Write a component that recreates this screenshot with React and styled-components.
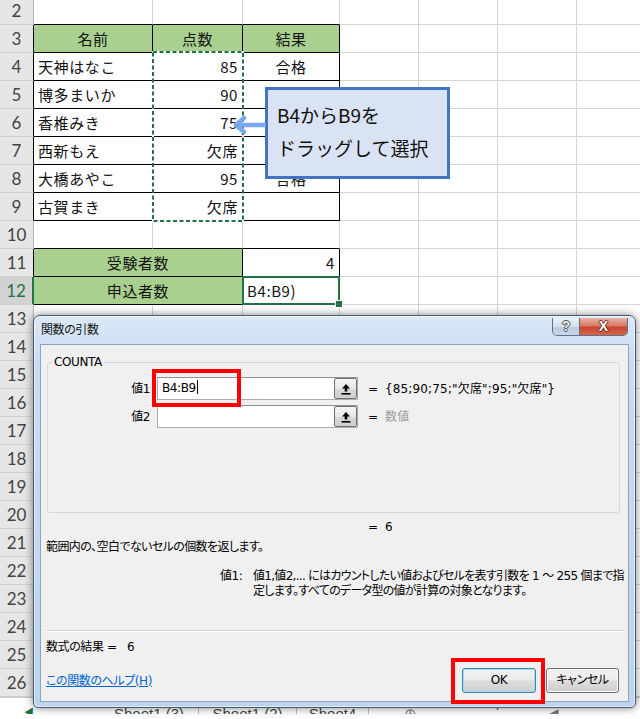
import React from "react";
import styled, { createGlobalStyle } from "styled-components";

const GRID = "#d4d4d4";
const BLACK = "#000";
const TABLE_GREEN = "#a9d08e";
const XL_GREEN = "#217346";

const tableRows = [
    { n: 4, name: "天神はなこ", score: "85", result: "合格" },
    { n: 5, name: "博多まいか", score: "90", result: "合格" },
    { n: 6, name: "香椎みき", score: "75", result: "合格" },
    { n: 7, name: "西新もえ", score: "欠席", result: "" },
    { n: 8, name: "大橋あやこ", score: "95", result: "合格" },
    { n: 9, name: "古賀まき", score: "欠席", result: "" },
];

const EmptyTail = () => (
    <>
        <Cell />
        <Cell />
        <Cell />
        <Cell $last />
    </>
);

const PlainRow = ({ n, topOfTable }) => (
    <>
        <RowHead>{n}</RowHead>
        <Cell $b={topOfTable ? BLACK : null} />
        <Cell $b={topOfTable ? BLACK : null} />
        <Cell $b={topOfTable ? BLACK : null} />
        <EmptyTail />
    </>
);

const Sheet = () => {
    const blanks = [];
    for (let n = 13; n <= 26; n++) blanks.push(<PlainRow key={n} n={n} />);

    return (
        <Grid>
            <PlainRow n={2} topOfTable />

            <RowHead $edge={BLACK}>3</RowHead>
            <Cell $r={BLACK} $b={BLACK} $fill={TABLE_GREEN} $align="center">名前</Cell>
            <Cell $r={BLACK} $b={BLACK} $fill={TABLE_GREEN} $align="center">点数</Cell>
            <Cell $r={BLACK} $b={BLACK} $fill={TABLE_GREEN} $align="center">結果</Cell>
            <EmptyTail />

            {tableRows.map(row => (
                <React.Fragment key={row.n}>
                    <RowHead $edge={BLACK}>{row.n}</RowHead>
                    <Cell $r={BLACK} $b={BLACK}>{row.name}</Cell>
                    <Cell $r={BLACK} $b={BLACK} $align="right">{row.score}</Cell>
                    <Cell $r={BLACK} $b={BLACK} $align="center">{row.result}</Cell>
                    <EmptyTail />
                </React.Fragment>
            ))}

            <PlainRow n={10} topOfTable />

            <RowHead $edge={BLACK}>11</RowHead>
            <Cell $span={2} $r={BLACK} $b={BLACK} $fill={TABLE_GREEN} $align="center">受験者数</Cell>
            <Cell $r={BLACK} $b={BLACK} $align="right">4</Cell>
            <EmptyTail />

            <RowHead $selected>12</RowHead>
            <Cell $span={2} $r={BLACK} $b={BLACK} $fill={TABLE_GREEN} $align="center">申込者数</Cell>
            <Cell $r={BLACK} $b={BLACK} $active>B4:B9)</Cell>
            <EmptyTail />

            {blanks}
        </Grid>
    );
};

const RefIcon = () => (
    <svg width="10" height="12" viewBox="0 0 10 12">
        <path d="M5 1 L9 5.5 H6.3 V8.5 H3.7 V5.5 H1 Z" fill="#000" />
        <rect x="0.5" y="10" width="9" height="1.6" fill="#000" />
    </svg>
);

const App = () => {
    return (
        <>
            <GlobalStyle />
            <Page>
                <Sheet />
                <TabBar>
                    <TabNav>◀</TabNav>
                    <Tab $w={67} $plain />
                    <Tab $w={99}>Sheet1 (3)</Tab>
                    <Tab $w={98}>Sheet1 (2)</Tab>
                    <Tab $w={72}>Sheet4</Tab>
                    <Tab $w={84} $plain>⊕</Tab>
                    <Tab $w={90} $plain>⋮</Tab>
                    <Tab $w={20} $plain>◀</Tab>
                </TabBar>

                <Marquee width="92" height="171" viewBox="0 0 92 171">
                    <rect x="1" y="1" width="90" height="169" fill="none" stroke="#fff" strokeWidth="2" />
                    <rect x="1" y="1" width="90" height="169" fill="none" stroke={XL_GREEN} strokeWidth="2" strokeDasharray="4 2.5" />
                </Marquee>

                <Callout>
                    B4からB9を<br />
                    ドラッグして選択
                </Callout>
                <Pointer width="36" height="22" viewBox="0 0 36 22">
                    <path d="M35 11 H7 M14 4 L6 11 L14 18" fill="none" stroke="#78a9f0" strokeWidth="4.5" strokeLinecap="round" strokeLinejoin="round" />
                </Pointer>

                <Dialog>
                    <TitleBar>
                        <Title>関数の引数</Title>
                        <Caption>
                            <HelpCap>?</HelpCap>
                            <CloseCap>X</CloseCap>
                        </Caption>
                    </TitleBar>
                    <Client>
                        <GroupBox>
                            <Legend>COUNTA</Legend>
                            <ArgRow>
                                <ArgLabel>値1</ArgLabel>
                                <RefEdit>
                                    <RefText>B4:B9<Caret /></RefText>
                                    <RefButton><RefIcon /></RefButton>
                                </RefEdit>
                                <Eq>=</Eq>
                                <ArgValue>{'{85;90;75;"欠席";95;"欠席"}'}</ArgValue>
                            </ArgRow>
                            <ArgRow>
                                <ArgLabel>値2</ArgLabel>
                                <RefEdit>
                                    <RefText />
                                    <RefButton><RefIcon /></RefButton>
                                </RefEdit>
                                <Eq>=</Eq>
                                <ArgValue $muted>数値</ArgValue>
                            </ArgRow>
                        </GroupBox>

                        <FuncResult>
                            <Eq>=</Eq>
                            <span>6</span>
                        </FuncResult>
                        <Description>範囲内の、空白でないセルの個数を返します。</Description>
                        <ArgHelp>
                            <span>値1:</span>
                            <div>
                                <HelpLine>値1,値2,... にはカウントしたい値およびセルを表す引数を 1 ～ 255 個まで指</HelpLine>
                                <HelpLine>定します。すべてのデータ型の値が計算の対象となります。</HelpLine>
                            </div>
                        </ArgHelp>
                        <Separator />
                        <FormulaResult>数式の結果 =&nbsp;&nbsp;&nbsp;6</FormulaResult>
                        <Footer>
                            <HelpLink>この関数のヘルプ(H)</HelpLink>
                            <Button $default>OK</Button>
                            <Button>キャンセル</Button>
                        </Footer>
                    </Client>
                </Dialog>

                <RedBox $x={152} $y={369} $w={89} $h={38} />
                <RedBox $x={451} $y={658} $w={94} $h={46} />
            </Page>
        </>
    );
};

export default App;

const GlobalStyle = createGlobalStyle`
html, body {
    margin: 0;
    padding: 0;
    background: #fff;
    overflow: hidden;
}
* {
    box-sizing: border-box;
}
`;

const Page = styled.div`
position: relative;
width: 640px;
height: 719px;
overflow: hidden;
background: #fff;
font-family: "Noto Sans CJK JP", sans-serif;
`;

const Grid = styled.div`
display: grid;
grid-template-columns: 34px 119px 90px 97px 79px 79px 79px 1fr;
grid-auto-rows: 28px;
margin-top: -3px;
`;

const RowHead = styled.div`
background: ${p => (p.$selected ? "#d2d2d2" : "#e6e6e6")};
color: ${p => (p.$selected ? XL_GREEN : "#444")};
border-bottom: 1px solid #d0d0d0;
border-right: ${p => (p.$selected ? `2px solid ${XL_GREEN}` : `1px solid ${p.$edge || "#b5b5b5"}`)};
text-align: center;
font: 17px/28px Lato, "Liberation Sans", sans-serif;
`;

const Cell = styled.div`
position: relative;
grid-column: span ${p => p.$span || 1};
background: ${p => p.$fill || "#fff"};
border-right: ${p => (p.$last ? "none" : `1px solid ${p.$r || GRID}`)};
border-bottom: 1px solid ${p => p.$b || GRID};
padding: 0 4px 0 4px;
text-align: ${p => p.$align || "left"};
font: 15px/27px "Noto Sans CJK JP", sans-serif;
letter-spacing: 0.6px;
color: #111;
white-space: nowrap;

${p => p.$active && `
    &::after {
        content: "";
        position: absolute;
        left: -1px;
        top: -1px;
        right: -1px;
        bottom: -1px;
        border: 2px solid ${XL_GREEN};
    }
    &::before {
        content: "";
        position: absolute;
        right: -4px;
        bottom: -4px;
        width: 6px;
        height: 6px;
        background: ${XL_GREEN};
        border: 1px solid #fff;
        z-index: 2;
    }
`}
`;

const TabBar = styled.div`
display: flex;
height: 17px;
border-top: 1px solid #c6c6c6;
background: #fff;
overflow: hidden;
`;

const TabNav = styled.div`
width: 33px;
flex: none;
padding: 8px 0 0 24px;
font-size: 10px;
line-height: 12px;
color: ${XL_GREEN};
`;

const Tab = styled.div`
width: ${p => p.$w}px;
flex: none;
padding-top: 9px;
border-right: 1px solid ${p => (p.$plain ? "#fff" : "#bdbdbd")};
text-align: center;
font: 15px/14px "Liberation Sans", sans-serif;
color: ${p => (p.$plain ? "#777" : "#3d4a40")};
`;

const Marquee = styled.svg`
position: absolute;
left: 152px;
top: 51px;
`;

const Callout = styled.div`
position: absolute;
left: 265px;
top: 87px;
width: 185px;
height: 92px;
background: #dae3f3;
border: 3px solid #4472c4;
padding: 8px 0 0 9px;
font: 19px/33px "Noto Sans CJK JP", sans-serif;
color: #111;
white-space: nowrap;
`;

const Pointer = styled.svg`
position: absolute;
left: 230px;
top: 114px;
`;

const Dialog = styled.div`
position: absolute;
left: 33px;
top: 315px;
width: 603px;
height: 393px;
display: flex;
flex-direction: column;
border: 1px solid #4a5a70;
border-radius: 7px 7px 5px 5px;
background: linear-gradient(180deg, #dbe9f8 0%, #c9dcf2 12%, #bdd4ee 100%);
box-shadow: 0 0 9px rgba(0, 0, 0, 0.5), inset 0 0 0 1px rgba(255, 255, 255, 0.55);
padding: 0 6px 5px 6px;
font: 12px/16px "DejaVu Sans", "Noto Sans CJK JP", sans-serif;
font-feature-settings: "palt";
letter-spacing: -0.4px;
color: #000;
`;

const TitleBar = styled.div`
display: flex;
height: 28px;
flex: none;
`;

const Title = styled.div`
line-height: 28px;
padding-left: 1px;
color: #111;
`;

const Caption = styled.div`
display: flex;
margin-left: auto;
margin-right: 1px;
margin-top: 2px;
height: 18px;
border: 1px solid #5f6f85;
border-top: none;
border-radius: 0 0 5px 5px;
overflow: hidden;
letter-spacing: 0;
`;

const HelpCap = styled.div`
width: 27px;
background: linear-gradient(180deg, #e9f0f8 0%, #d4e0ee 50%, #bccbdd 51%, #c8d7e8 100%);
border-right: 1px solid #5f6f85;
text-align: center;
font: bold 14px/17px "Liberation Sans", sans-serif;
color: #e8e8e8;
text-shadow: -1px 0 #555, 1px 0 #555, 0 -1px #555, 0 1px #555;
`;

const CloseCap = styled.div`
width: 47px;
background: linear-gradient(180deg, #eab3a6 0%, #d97a68 45%, #c8452f 55%, #d4644c 100%);
text-align: center;
font: bold 14px/17px "Liberation Sans", sans-serif;
color: #fff;
text-shadow: -1px 0 #6b2b22, 1px 0 #6b2b22, 0 -1px #6b2b22, 0 1px #6b2b22;
`;

const Client = styled.div`
flex: 1;
display: flex;
flex-direction: column;
background: #f0f0f0;
border: 1px solid #8ea2ba;
`;

const GroupBox = styled.div`
position: relative;
height: 151px;
margin: 17px 8px 0 6px;
padding-top: 14px;
border: 1px solid #d5d9dd;
border-radius: 3px;
display: flex;
flex-direction: column;
gap: 5px;
`;

const Legend = styled.div`
position: absolute;
left: 4px;
top: -9px;
padding: 0 2px;
background: #f0f0f0;
line-height: 16px;
`;

const ArgRow = styled.div`
display: flex;
align-items: center;
height: 23px;
`;

const ArgLabel = styled.div`
width: 102px;
text-align: right;
`;

const RefEdit = styled.div`
display: flex;
width: 201px;
height: 23px;
margin-left: 7px;
border: 1px solid #abadb3;
border-top-color: #8e939b;
background: #fff;
`;

const RefText = styled.div`
flex: 1;
padding: 2px 0 0 4px;
line-height: 17px;
`;

const Caret = styled.span`
display: inline-block;
width: 1px;
height: 14px;
margin-left: 1px;
vertical-align: -2px;
background: #000;
`;

const RefButton = styled.div`
width: 23px;
display: flex;
align-items: center;
justify-content: center;
border: 1px solid #707070;
border-radius: 2px;
background: linear-gradient(180deg, #f4f4f4 0%, #e8e8e8 50%, #d9d9d9 51%, #cfcfcf 100%);
`;

const Eq = styled.span`
width: 17px;
margin-left: 10px;
`;

const ArgValue = styled.span`
color: ${p => (p.$muted ? "#a0a0a0" : "#000")};
letter-spacing: 0.15px;
`;

const FuncResult = styled.div`
display: flex;
margin: 6px 0 0 317px;
`;

const Description = styled.div`
margin: 4px 0 0 5px;
letter-spacing: -0.6px;
`;

const ArgHelp = styled.div`
display: grid;
grid-template-columns: 33px 380px;
margin: 14px 0 0 179px;
line-height: 15px;
`;

const HelpLine = styled.div`
white-space: nowrap;
letter-spacing: -0.7px;
`;

const Separator = styled.div`
height: 2px;
margin: 31px 3px 0 5px;
border-top: 1px solid #d5d5d5;
border-bottom: 1px solid #fff;
`;

const FormulaResult = styled.div`
margin: 7px 0 0 5px;
`;

const Footer = styled.div`
display: flex;
align-items: center;
gap: 10px;
margin: 13px 9px 0 5px;
`;

const HelpLink = styled.span`
margin-right: auto;
color: #0066cc;
text-decoration: underline;
`;

const Button = styled.div`
width: ${p => (p.$default ? 74 : 73)}px;
height: 25px;
border: 1px solid ${p => (p.$default ? "#3c7fb1" : "#707070")};
border-radius: 3px;
background: linear-gradient(180deg, #f2f2f2 0%, #ebebeb 48%, #dddddd 52%, #cfcfcf 100%);
box-shadow: ${p => (p.$default ? "inset 0 0 0 1px #a6dcf8" : "inset 0 0 0 1px #fcfcfc")};
text-align: center;
line-height: 23px;
`;

const RedBox = styled.div`
position: absolute;
left: ${p => p.$x}px;
top: ${p => p.$y}px;
width: ${p => p.$w}px;
height: ${p => p.$h}px;
border: 4px solid #ff0000;
`;
